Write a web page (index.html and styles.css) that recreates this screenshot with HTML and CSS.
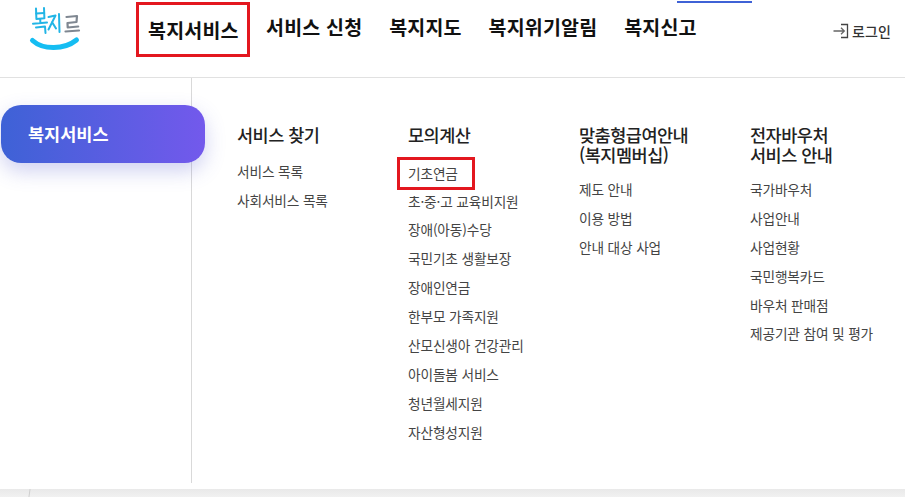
FILE: index.html
```html
<!DOCTYPE html>
<html lang="ko">
<head>
<meta charset="utf-8">
<title>복지로</title>
<link rel="stylesheet" href="styles.css">
</head>
<body>
<div class="page">
  <header class="header">
    <span class="topline"></span>
    <a class="logo" aria-label="복지로">
      <svg width="56" height="50" viewBox="0 0 56 50" fill="none" stroke-linecap="round" stroke-linejoin="round">
        <g stroke="#22b5e6" stroke-width="2">
          <path d="M8 3.500l.4 10.500 8-.8M16 3l.4 10.200"/>
          <path d="M8.200 8.500l8-.5"/>
          <path d="M12.200 14l.2 4M5 18.700l14-1.200"/>
          <path d="M8 22.500l9-1 .5 6.500"/>
          <path d="M20.500 12l7-1.500-7 14M24 17l4 6.500"/>
          <path d="M31 9l.5 18"/>
        </g>
        <g stroke="#7f8791" stroke-width="2.200">
          <path d="M38.500 12l10.500-1-.5 6-9 1 .2 4.500 10.500-1"/>
          <path d="M37.500 26.500l13.500-1"/>
        </g>
        <path d="M4.500 35.500C15 45 36 45 48.500 35" stroke="#15bdf2" stroke-width="5"/>
      </svg>
    </a>
    <nav class="gnb">
      <a class="gnb-item gnb-item-marked">복지서비스</a>
      <a class="gnb-item">서비스 신청</a>
      <a class="gnb-item">복지지도</a>
      <a class="gnb-item">복지위기알림</a>
      <a class="gnb-item">복지신고</a>
    </nav>
    <a class="login">
      <svg width="16" height="16" viewBox="0 0 16 16" fill="none" stroke="#555" stroke-width="1.300">
        <path d="M8 1.500h6.500v13H8" stroke="#444"/>
        <path d="M.5 8h10.500M8 4.800L11.300 8 8 11.200" stroke="#666"/>
      </svg>
      <span>로그인</span>
    </a>
  </header>

  <main class="menu">
    <aside class="side">
      <div class="side-active">복지서비스</div>
    </aside>
    <div class="columns">
      <section class="col col-1">
        <h2>서비스 찾기</h2>
        <ul>
          <li>서비스 목록</li>
          <li>사회서비스 목록</li>
        </ul>
      </section>
      <section class="col col-2">
        <h2>모의계산</h2>
        <ul>
          <li class="marked">기초연금</li>
          <li>초·중·고 교육비지원</li>
          <li>장애(아동)수당</li>
          <li>국민기초 생활보장</li>
          <li>장애인연금</li>
          <li>한부모 가족지원</li>
          <li>산모신생아 건강관리</li>
          <li>아이돌봄 서비스</li>
          <li>청년월세지원</li>
          <li>자산형성지원</li>
        </ul>
      </section>
      <section class="col col-3">
        <h2>맞춤형급여안내<br>(복지멤버십)</h2>
        <ul>
          <li>제도 안내</li>
          <li>이용 방법</li>
          <li>안내 대상 사업</li>
        </ul>
      </section>
      <section class="col col-4">
        <h2>전자바우처<br>서비스 안내</h2>
        <ul>
          <li>국가바우처</li>
          <li>사업안내</li>
          <li>사업현황</li>
          <li>국민행복카드</li>
          <li>바우처 판매점</li>
          <li>제공기관 참여 및 평가</li>
        </ul>
      </section>
    </div>
  </main>
  <footer class="footer"><span class="footer-mark"></span></footer>
</div>
</body>
</html>
```
FILE: styles.css
```css
* { box-sizing: border-box; margin: 0; padding: 0; }
html, body { height: 100%; }
body {
  background: #fff;
  font-family: "Noto Sans CJK KR", "Noto Sans", sans-serif;
  overflow: hidden;
}
.page { width: 905px; height: 497px; display: flex; flex-direction: column; }

.header {
  position: relative;
  height: 78px;
  flex: none;
  display: flex;
  border-bottom: 1px solid #e1e1e1;
}
.topline {
  position: absolute;
  left: 677px;
  top: 1px;
  width: 75px;
  height: 2px;
  background: #3f62d6;
}
.logo { flex: none; width: 136px; padding: 5px 0 0 28px; }
.logo svg { display: block; }
.gnb { display: flex; align-items: flex-start; flex: none; width: 697px; }
.gnb-item {
  height: 56px;
  padding: 12px 0 0;
  margin-right: 26.800px;
  font-size: 19.500px;
  font-weight: 700;
  line-height: 30px;
  color: #111;
  letter-spacing: 0.2px;
  white-space: nowrap;
}
.gnb-item-marked {
  margin: 2px 16.300px 0 0;
  height: 55px;
  padding: 10px 8px 0 9px;
  border: 3px solid #e3171f;
}
.login {
  display: flex;
  align-items: center;
  gap: 3px;
  height: 61px;
  font-size: 14px;
  font-weight: 500;
  color: #333;
  letter-spacing: 0.1px;
}

.menu { display: flex; height: 405px; flex: none; }
.side { width: 192px; flex: none; border-right: 1px solid #d9d9d9; padding-top: 27px; }
.side-active {
  width: 204px;
  height: 58px;
  margin-left: 1px;
  padding-left: 27px;
  border-radius: 20px;
  background: linear-gradient(90deg, #3e62d6, #7359ec);
  box-shadow: 0 8px 20px rgba(82, 88, 205, .28);
  color: #fff;
  font-size: 17.500px;
  font-weight: 700;
  line-height: 58px;
  position: relative;
}
.columns { display: flex; align-items: flex-start; padding-top: 47px; }
.col h2 {
  font-size: 17.500px;
  font-weight: 500;
  line-height: 20px;
  color: #222;
  letter-spacing: -0.5px;
  margin-bottom: 10px;
}
.col ul { list-style: none; }
.col li {
  height: 28.900px;
  font-size: 13.700px;
  line-height: 29px;
  color: #444;
  white-space: nowrap;
  letter-spacing: -0.15px;
}
.col-1 { width: 171px; margin-left: 45px; }
.col-1 h2 { margin-bottom: 12px; }
.col-2 { width: 171px; }
.col-3 { width: 171px; }
.col-4 { width: 155px; }
.col-2 h2 { margin-bottom: 12px; }
.col-2 li.marked {
  width: 78px;
  height: 33px;
  margin: 0 0 -3.500px -11px;
  padding-left: 8px;
  border: 3px solid #e3171f;
  line-height: 27px;
}
.footer { position: relative; flex: 1; margin-top: 6px; background: linear-gradient(#e9e9e9, #f1f1f1); }
.footer-mark {
  position: absolute;
  left: 29px;
  top: 0;
  width: 1px;
  height: 8px;
  background: #cfcfcf;
  transform: skewX(-8deg);
}
```
